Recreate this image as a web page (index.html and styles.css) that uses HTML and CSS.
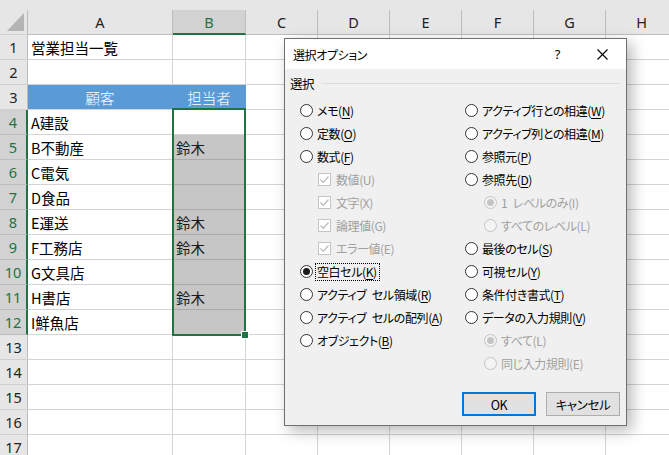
FILE: index.html
```html
<!DOCTYPE html>
<html lang="ja">
<head>
<meta charset="utf-8">
<link rel="stylesheet" href="styles.css">
</head>
<body>
<div class="sheet">
  <div class="topstrip"></div>
  <div class="row hdr">
    <div class="rh corner"><svg width="18" height="19" viewBox="0 0 18 19"><polygon points="17,0 17,18 0,18" fill="#b4b4b4"/></svg></div>
    <div class="c a">A</div><div class="c b selhdr">B</div><div class="c x">C</div><div class="c x">D</div><div class="c x">E</div><div class="c x">F</div><div class="c x">G</div><div class="c h">H</div>
  </div>
  <div class="row"><div class="rh">1</div><div class="c a">営業担当一覧</div><div class="c b"></div><div class="c x"></div><div class="c x"></div><div class="c x"></div><div class="c x"></div><div class="c x"></div><div class="c h"></div></div>
  <div class="row"><div class="rh">2</div><div class="c a"></div><div class="c b"></div><div class="c x"></div><div class="c x"></div><div class="c x"></div><div class="c x"></div><div class="c x"></div><div class="c h"></div></div>
  <div class="row"><div class="rh">3</div><div class="c a th">顧客</div><div class="c b th">担当者</div><div class="c x"></div><div class="c x"></div><div class="c x"></div><div class="c x"></div><div class="c x"></div><div class="c h"></div></div>
  <div class="row"><div class="rh sel">4</div><div class="c a">A建設</div><div class="c b"></div><div class="c x"></div><div class="c x"></div><div class="c x"></div><div class="c x"></div><div class="c x"></div><div class="c h"></div></div>
  <div class="row"><div class="rh sel">5</div><div class="c a">B不動産</div><div class="c b shade">鈴木</div><div class="c x"></div><div class="c x"></div><div class="c x"></div><div class="c x"></div><div class="c x"></div><div class="c h"></div></div>
  <div class="row"><div class="rh sel">6</div><div class="c a">C電気</div><div class="c b shade"></div><div class="c x"></div><div class="c x"></div><div class="c x"></div><div class="c x"></div><div class="c x"></div><div class="c h"></div></div>
  <div class="row"><div class="rh sel">7</div><div class="c a">D食品</div><div class="c b shade"></div><div class="c x"></div><div class="c x"></div><div class="c x"></div><div class="c x"></div><div class="c x"></div><div class="c h"></div></div>
  <div class="row"><div class="rh sel">8</div><div class="c a">E運送</div><div class="c b shade">鈴木</div><div class="c x"></div><div class="c x"></div><div class="c x"></div><div class="c x"></div><div class="c x"></div><div class="c h"></div></div>
  <div class="row"><div class="rh sel">9</div><div class="c a">F工務店</div><div class="c b shade">鈴木</div><div class="c x"></div><div class="c x"></div><div class="c x"></div><div class="c x"></div><div class="c x"></div><div class="c h"></div></div>
  <div class="row"><div class="rh sel">10</div><div class="c a">G文具店</div><div class="c b shade"></div><div class="c x"></div><div class="c x"></div><div class="c x"></div><div class="c x"></div><div class="c x"></div><div class="c h"></div></div>
  <div class="row"><div class="rh sel">11</div><div class="c a">H書店</div><div class="c b shade">鈴木</div><div class="c x"></div><div class="c x"></div><div class="c x"></div><div class="c x"></div><div class="c x"></div><div class="c h"></div></div>
  <div class="row"><div class="rh sel">12</div><div class="c a">I鮮魚店</div><div class="c b shade"></div><div class="c x"></div><div class="c x"></div><div class="c x"></div><div class="c x"></div><div class="c x"></div><div class="c h"></div></div>
  <div class="row"><div class="rh">13</div><div class="c a"></div><div class="c b"></div><div class="c x"></div><div class="c x"></div><div class="c x"></div><div class="c x"></div><div class="c x"></div><div class="c h"></div></div>
  <div class="row"><div class="rh">14</div><div class="c a"></div><div class="c b"></div><div class="c x"></div><div class="c x"></div><div class="c x"></div><div class="c x"></div><div class="c x"></div><div class="c h"></div></div>
  <div class="row"><div class="rh">15</div><div class="c a"></div><div class="c b"></div><div class="c x"></div><div class="c x"></div><div class="c x"></div><div class="c x"></div><div class="c x"></div><div class="c h"></div></div>
  <div class="row"><div class="rh">16</div><div class="c a"></div><div class="c b"></div><div class="c x"></div><div class="c x"></div><div class="c x"></div><div class="c x"></div><div class="c x"></div><div class="c h"></div></div>
  <div class="row"><div class="rh">17</div><div class="c a"></div><div class="c b"></div><div class="c x"></div><div class="c x"></div><div class="c x"></div><div class="c x"></div><div class="c x"></div><div class="c h"></div></div>

  <div class="selbox"></div>
  <div class="handle"></div>
</div>

<div class="dialog">
  <div class="titlebar">
    <span class="title">選択オプション</span>
    <span class="help">?</span>
    <svg class="close" width="11" height="11" viewBox="0 0 11 11"><path d="M0.5 0.5 L10.5 10.5 M10.5 0.5 L0.5 10.5" stroke="#000" stroke-width="1.1" fill="none"/></svg>
  </div>
  <div class="body">
    <div class="legend"><span>選択</span><span class="rule"></span></div>
    <div class="opts">
      <div class="col">
        <div class="opt"><span class="radio"></span><span>メモ(<u>N</u>)</span></div>
        <div class="opt"><span class="radio"></span><span>定数(<u>O</u>)</span></div>
        <div class="opt"><span class="radio"></span><span>数式(<u>F</u>)</span></div>
        <div class="opt sub dis"><span class="check"><svg width="11" height="11" viewBox="0 0 11 11"><path d="M1.5 5.5 L4.2 8.3 L9.5 2.5" stroke="#b9b9b9" stroke-width="1.2" fill="none"/></svg></span><span>数値(U)</span></div>
        <div class="opt sub dis"><span class="check"><svg width="11" height="11" viewBox="0 0 11 11"><path d="M1.5 5.5 L4.2 8.3 L9.5 2.5" stroke="#b9b9b9" stroke-width="1.2" fill="none"/></svg></span><span>文字(X)</span></div>
        <div class="opt sub dis"><span class="check"><svg width="11" height="11" viewBox="0 0 11 11"><path d="M1.5 5.5 L4.2 8.3 L9.5 2.5" stroke="#b9b9b9" stroke-width="1.2" fill="none"/></svg></span><span>論理値(G)</span></div>
        <div class="opt sub dis"><span class="check"><svg width="11" height="11" viewBox="0 0 11 11"><path d="M1.5 5.5 L4.2 8.3 L9.5 2.5" stroke="#b9b9b9" stroke-width="1.2" fill="none"/></svg></span><span>エラー値(E)</span></div>
        <div class="opt"><span class="radio on"></span><span class="focus">空白セル(<u>K</u>)</span></div>
        <div class="opt"><span class="radio"></span><span>アクティブ&ensp;セル領域(<u>R</u>)</span></div>
        <div class="opt"><span class="radio"></span><span>アクティブ&ensp;セルの配列(<u>A</u>)</span></div>
        <div class="opt"><span class="radio"></span><span>オブジェクト(<u>B</u>)</span></div>
      </div>
      <div class="col">
        <div class="opt"><span class="radio"></span><span>アクティブ行との相違(<u>W</u>)</span></div>
        <div class="opt"><span class="radio"></span><span>アクティブ列との相違(<u>M</u>)</span></div>
        <div class="opt"><span class="radio"></span><span>参照元(<u>P</u>)</span></div>
        <div class="opt"><span class="radio"></span><span>参照先(<u>D</u>)</span></div>
        <div class="opt sub2 dis"><span class="radio on"></span><span>1&ensp;レベルのみ(I)</span></div>
        <div class="opt sub2 dis"><span class="radio"></span><span>すべてのレベル(L)</span></div>
        <div class="opt"><span class="radio"></span><span>最後のセル(<u>S</u>)</span></div>
        <div class="opt"><span class="radio"></span><span>可視セル(<u>Y</u>)</span></div>
        <div class="opt"><span class="radio"></span><span>条件付き書式(<u>T</u>)</span></div>
        <div class="opt"><span class="radio"></span><span>データの入力規則(<u>V</u>)</span></div>
        <div class="opt sub2 dis"><span class="radio on"></span><span>すべて(L)</span></div>
        <div class="opt sub2 dis"><span class="radio"></span><span>同じ入力規則(E)</span></div>
      </div>
    </div>
    <div class="buttons">
      <div class="btn default">OK</div>
      <div class="btn">キャンセル</div>
    </div>
  </div>
</div>
</body>
</html>
```

FILE: styles.css
```css
html, body {
  margin: 0;
  padding: 0;
  background: #fff;
  overflow: hidden;
  width: 669px;
  height: 455px;
}
.sheet {
  position: relative;
  width: 669px;
  height: 455px;
  overflow: hidden;
  font-family: "Noto Sans CJK JP", sans-serif;
  font-size: 14.5px;
  color: #000;
}
.topstrip {
  height: 10px;
  background: #e6e6e6;
}
.row {
  display: flex;
  height: 25px;
  width: 700px;
}
.rh, .c {
  box-sizing: border-box;
  height: 100%;
  border-right: 1px solid #d4d4d4;
  border-bottom: 1px solid #d4d4d4;
  flex: none;
  display: flex;
  align-items: center;
  white-space: nowrap;
  overflow: hidden;
}
.rh {
  width: 28px;
  background: #e6e6e6;
  justify-content: center;
  font-family: "Noto Sans", "Noto Sans CJK JP", sans-serif;
  font-size: 14.5px;
  color: #222;
  border-right-color: #bdbdbd;
  border-bottom-color: #d0d0d0;
}
.rh.sel {
  background: #d2d2d2;
  color: #217346;
  border-right: 2px solid #217346;
  border-bottom-color: #bdbdbd;
}
.corner {
  align-items: flex-end;
  justify-content: flex-end;
  padding: 0 2px 2px 0;
}
.a { width: 145px; padding-left: 3px; }
.b { width: 73px; padding-left: 3px; }
.x { width: 72px; }
.h { width: 72px; }
.hdr .c {
  background: #e6e6e6;
  justify-content: center;
  padding-left: 0;
  font-family: "Noto Sans", "Noto Sans CJK JP", sans-serif;
  font-size: 14.5px;
  color: #222;
  border-right-color: #bdbdbd;
  border-bottom-color: #bdbdbd;
}
.hdr .c.selhdr {
  background: #d2d2d2;
  color: #217346;
  border-bottom: 2px solid #217346;
}
.c.th {
  background: #5b9bd5;
  color: #fff;
  justify-content: center;
  padding-left: 0;
  border-right-color: #5b9bd5;
  font-weight: 300;
}
.c.shade {
  background: #c6c6c6;
  border-bottom-color: #ababab;
  color: #1a1a1a;
}
.selbox {
  position: absolute;
  left: 172px;
  top: 108px;
  width: 74px;
  height: 228px;
  box-sizing: border-box;
  border: 2px solid #217346;
}
.handle {
  position: absolute;
  left: 241px;
  top: 331px;
  width: 6px;
  height: 6px;
  background: #217346;
  border: 1px solid #fff;
}

/* dialog */
.dialog {
  position: absolute;
  left: 284px;
  top: 38px;
  width: 343px;
  height: 388px;
  box-sizing: border-box;
  border: 1px solid #6f6f6f;
  background: #f0f0f0;
  box-shadow: 5px 5px 14px rgba(0,0,0,0.28);
  display: flex;
  flex-direction: column;
  font-family: "Noto Sans CJK JP", sans-serif;
  font-feature-settings: "palt";
  font-size: 12px;
  letter-spacing: -0.4px;
  color: #000;
}
.titlebar {
  height: 30px;
  background: #fff;
  display: flex;
  align-items: center;
  padding-left: 8px;
  flex: none;
}
.title {
  font-size: 12px;
}
.help {
  margin-left: auto;
  font-family: "Noto Sans", sans-serif;
  font-size: 13px;
  margin-right: 37px;
}
.close {
  margin-right: 18px;
}
.body {
  flex: 1;
  display: flex;
  flex-direction: column;
}
.legend {
  margin-top: 3px;
  height: 22px;
  display: flex;
  align-items: center;
  padding-left: 5px;
  padding-right: 6px;
  font-size: 12.5px;
}
.rule {
  flex: 1;
  height: 1px;
  background: #dcdcdc;
  margin-left: 7px;
}
.opts {
  margin-top: 5px;
  display: flex;
  padding-left: 15px;
}
.col {
  display: flex;
  flex-direction: column;
}
.col:first-child {
  width: 165px;
}
.opt {
  height: 23px;
  display: flex;
  align-items: center;
  white-space: nowrap;
}
.opt u {
  text-decoration-thickness: 1px;
  text-underline-offset: 2px;
}
.radio {
  width: 13px;
  height: 13px;
  box-sizing: border-box;
  border: 1px solid #333;
  border-radius: 50%;
  background: #fff;
  margin-right: 4px;
  flex: none;
  display: flex;
  align-items: center;
  justify-content: center;
}
.radio.on::after {
  content: "";
  width: 7px;
  height: 7px;
  border-radius: 50%;
  background: #1a1a1a;
}
.check {
  width: 13px;
  height: 13px;
  box-sizing: border-box;
  border: 1px solid #c4c4c4;
  background: #fff;
  margin-right: 5px;
  flex: none;
  display: flex;
  align-items: center;
  justify-content: center;
}
.opt.sub { padding-left: 18px; }
.opt.sub2 { padding-left: 19px; }
.opt.dis { color: #a0a0a0; }
.opt.dis .radio { border-color: #c4c4c4; background: #f4f4f4; }
.opt.dis .radio.on::after { background: #c4c4c4; }
.focus {
  outline: 1px dotted #000;
  outline-offset: 0;
  padding: 0 2px 0 1px;
  margin-left: -1px;
  line-height: 16px;
}
.buttons {
  margin-top: auto;
  display: flex;
  justify-content: flex-end;
  gap: 10px;
  padding-right: 6px;
  margin-bottom: 9px;
}
.btn {
  width: 74px;
  height: 24px;
  box-sizing: border-box;
  border: 1px solid #adadad;
  background: #e1e1e1;
  display: flex;
  align-items: center;
  justify-content: center;
  font-size: 12.5px;
}
.btn.default {
  border: 2px solid #0078d7;
}
```
